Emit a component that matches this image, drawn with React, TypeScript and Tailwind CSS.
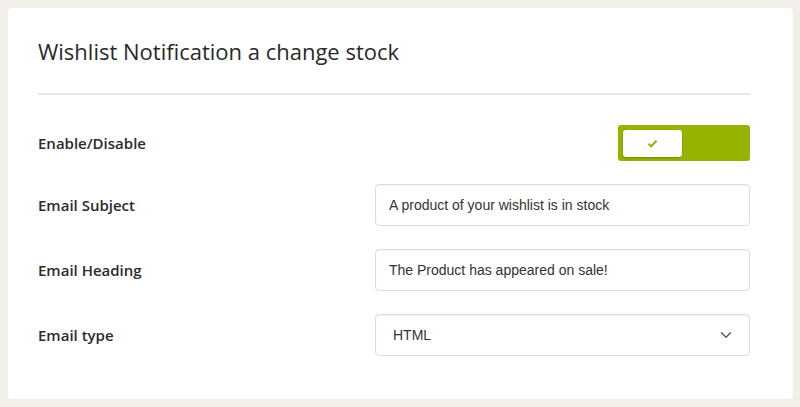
import { ChevronDown } from "lucide-react";

const rows = [
  { label: "Email Subject", value: "A product of your wishlist is in stock" },
  { label: "Email Heading", value: "The Product has appeared on sale!" },
];

export default function App() {
  return (
    <div className="min-h-screen bg-[#f2efe8] p-2 pb-2 pr-[7px] font-['Open_Sans',sans-serif] text-[#2b2b2b]">
      <div className="h-[391px] rounded-[4px] bg-white px-[30px] pt-[28px]">
        <div className="mx-0 w-[712px]">
          <h1 className="text-[22px] leading-[30px] font-normal text-[#2a2a2a]">
            Wishlist Notification a change stock
          </h1>
          <div className="mt-[27px] h-[2px] bg-[#e8e8e8]" />

          <div className="mt-[30px] flex flex-col gap-[23px]">
            <div className="flex h-[36px] items-center justify-between">
              <span className="text-[15px] font-semibold">Enable/Disable</span>
              <div className="flex h-[36px] w-[132px] items-center rounded-[3px] bg-[#97b300] pl-[5px]">
                <div className="flex h-[27px] w-[59px] items-center justify-center rounded-[3px] bg-white shadow-[0_1px_2px_rgba(0,0,0,0.25)]">
                  <svg width="11" height="9" viewBox="0 0 11 9" fill="none">
                    <path d="M1.5 4.8 L4.2 7.2 L9.5 1.8" stroke="#97b300" strokeWidth="2.2" />
                  </svg>
                </div>
              </div>
            </div>

            {rows.map((r) => (
              <div key={r.label} className="flex h-[42px] items-center justify-between">
                <span className="text-[15px] font-semibold">{r.label}</span>
                <div className="flex h-[42px] w-[375px] items-center rounded-[4px] border border-[#dcdcdc] px-[13px] font-['Liberation_Sans',Arial,sans-serif] text-[14px] text-[#333] shadow-[inset_0_1px_2px_rgba(0,0,0,0.05)]">
                  {r.value}
                </div>
              </div>
            ))}

            <div className="flex h-[42px] items-center justify-between">
              <span className="text-[15px] font-semibold">Email type</span>
              <div className="flex h-[42px] w-[375px] items-center justify-between rounded-[4px] border border-[#dcdcdc] pr-[14px] pl-[17px] font-['Liberation_Sans',Arial,sans-serif] text-[14px] text-[#333] shadow-[inset_0_1px_2px_rgba(0,0,0,0.05)]">
                <span>HTML</span>
                <ChevronDown size={18} strokeWidth={1.8} className="text-[#555]" />
              </div>
            </div>
          </div>
        </div>
      </div>
    </div>
  );
}
